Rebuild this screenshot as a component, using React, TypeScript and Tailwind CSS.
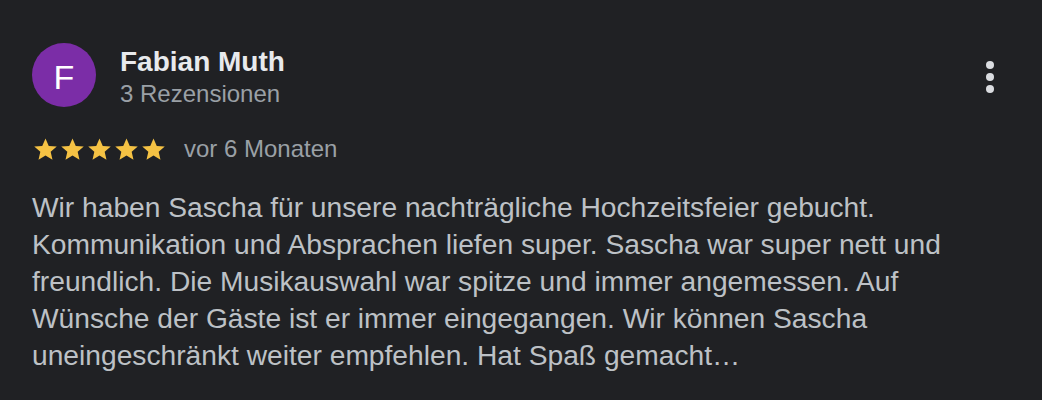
function Star() {
  return (
    <svg width="27" height="27" viewBox="0 0 24 24">
      <path
        d="M12 2.2l2.9 6.6 7.1.6-5.4 4.7 1.6 7-6.2-3.7-6.2 3.7 1.6-7L2 9.4l7.1-.6z"
        fill="#f5c244"
      />
    </svg>
  );
}

function Kebab() {
  return (
    <svg width="24" height="36" viewBox="0 0 24 36" fill="#dadce0">
      <circle cx="12" cy="6" r="4" />
      <circle cx="12" cy="18" r="4" />
      <circle cx="12" cy="30" r="4" />
    </svg>
  );
}

export default function App() {
  return (
    <div
      className="min-h-[400px] w-full bg-[#202124] pl-[32px] pr-[40px] pt-[43px]"
      style={{ fontFamily: '"Liberation Sans", Arial, sans-serif' }}
    >
      <div className="flex items-start justify-between">
        <div className="flex items-start">
          <div className="flex h-16 w-16 items-center justify-center rounded-full bg-[#7b2da7] pt-[4px] text-[34px] leading-none text-white">
            F
          </div>
          <div className="ml-[24px] mt-[3px] flex flex-col">
            <span className="text-[28px] font-bold leading-[32px] text-[#e8eaed]">Fabian Muth</span>
            <span className="mt-[1px] text-[24px] leading-[30px] text-[#9aa0a6]">3 Rezensionen</span>
          </div>
        </div>
        <button className="mt-[16px]">
          <Kebab />
        </button>
      </div>
      <div className="mt-[24px] flex h-[32px] items-center">
        <div className="flex">
          <Star />
          <Star />
          <Star />
          <Star />
          <Star />
        </div>
        <span className="ml-[17px] text-[24px] leading-[32px] text-[#9aa0a6]">vor 6 Monaten</span>
      </div>
      <p className="mt-[24px] max-w-[940px] text-[28.2px] leading-[37px] text-[#bdc1c6]">
        Wir haben Sascha für unsere nachträgliche Hochzeitsfeier gebucht. Kommunikation und Absprachen
        liefen super. Sascha war super nett und freundlich. Die Musikauswahl war spitze und immer
        angemessen. Auf Wünsche der Gäste ist er immer eingegangen. Wir können Sascha uneingeschränkt
        weiter empfehlen. Hat Spaß gemacht…
      </p>
    </div>
  );
}
